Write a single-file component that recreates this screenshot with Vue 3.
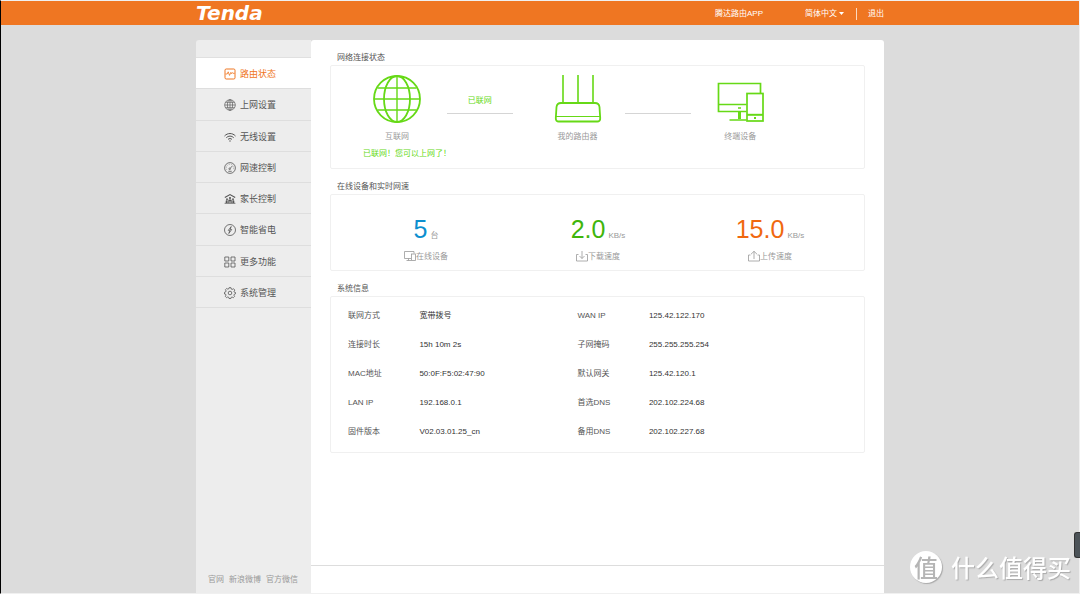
<script setup>
import { ref } from 'vue'

const language = ref('zh')
const menu = [
  { id: 'status', label: '路由状态' },
  { id: 'internet', label: '上网设置' },
  { id: 'wifi', label: '无线设置' },
  { id: 'speed', label: '网速控制' },
  { id: 'parent', label: '家长控制' },
  { id: 'power', label: '智能省电' },
  { id: 'more', label: '更多功能' },
  { id: 'system', label: '系统管理' }
]
const active = ref('status')

const stats = [
  { id: 'devices', value: '5', unit: '台', label: '在线设备' },
  { id: 'down', value: '2.0', unit: 'KB/s', label: '下载速度' },
  { id: 'up', value: '15.0', unit: 'KB/s', label: '上传速度' }
]

const info = [
  ['联网方式', '宽带拨号', 'WAN IP', '125.42.122.170'],
  ['连接时长', '15h 10m 2s', '子网掩码', '255.255.255.254'],
  ['MAC地址', '50:0F:F5:02:47:90', '默认网关', '125.42.120.1'],
  ['LAN IP', '192.168.0.1', '首选DNS', '202.102.224.68'],
  ['固件版本', 'V02.03.01.25_cn', '备用DNS', '202.102.227.68']
]
</script>

<template>
  <div class="page">
    <header class="topbar">
      <div class="topbar-inner">
        <a class="logo" href="#">Tenda</a>
        <nav class="top-links">
          <a class="app-link" href="#">腾达路由APP</a>
          <label class="language">
            <select v-model="language" aria-label="语言">
              <option value="zh">简体中文</option>
            </select>
            <svg class="caret" viewBox="0 0 5 3" aria-hidden="true"><path d="M0 0h5L2.500 3z" fill="#fff" /></svg>
          </label>
          <a class="logout" href="#">退出</a>
        </nav>
      </div>
    </header>

    <div class="shell">
      <aside class="sidebar">
        <nav>
          <ul class="menu">
            <li v-for="m in menu" :key="m.id">
              <a href="#" :class="{ active: active === m.id }" @click.prevent="active = m.id">
                <svg class="menu-icon" viewBox="0 0 12 12" fill="none" stroke="currentColor" stroke-width="0.8" aria-hidden="true">
                  <template v-if="m.id === 'status'">
                    <rect x="1" y="1" width="10" height="10" rx="1.200" stroke-width="1" />
                    <path d="M1.500 6h1.700l1-2.200 1.300 3.600 1.300-3 .8 1.300.7-1.200.6 .8h1.800" />
                  </template>
                  <template v-else-if="m.id === 'internet'">
                    <g stroke-width=".65">
                      <circle cx="6" cy="6" r="5.300" />
                      <ellipse cx="6" cy="6" rx="2.600" ry="5.300" />
                      <path d="M6 .7v10.600M.7 6h10.600M1.500 3.300h9M1.500 8.700h9" />
                    </g>
                  </template>
                  <template v-else-if="m.id === 'wifi'">
                    <path d="M.5 5C3.600 1.700 8.400 1.700 11.500 5M2.300 6.700c2.200-2.100 5.200-2.100 7.400 0M4 8.400c1.200-1.100 2.800-1.100 4 0" stroke-width="1" />
                    <circle cx="6" cy="10" r=".7" fill="currentColor" stroke="none" />
                  </template>
                  <template v-else-if="m.id === 'speed'">
                    <circle cx="6" cy="6" r="5.400" />
                    <path d="M2.800 7.800A3.700 3.700 0 1 1 9.200 7.800" stroke-width=".5" stroke-dasharray=".8 .9" />
                    <circle cx="5.700" cy="6.800" r=".8" />
                    <path d="M6.300 6.200L8.300 4M4.300 9.300h3.400" />
                  </template>
                  <template v-else-if="m.id === 'parent'">
                    <path d="M.8 4.500L6 1.600l5.200 2.900" stroke-width="1.200" />
                    <g fill="currentColor" stroke="none">
                      <circle cx="6" cy="5" r="1.100" />
                      <circle cx="3" cy="6.200" r=".9" />
                      <circle cx="9" cy="6.200" r=".9" />
                      <path d="M4.300 10V7.200q0-.8.8-.8h1.800q.8 0 .8.800V10H6.500V8.200h-1V10zM1.700 10V8q0-.7.7-.7h1.200V10zM8.400 10V7.300h1.200q.7 0 .7.700v2z" />
                    </g>
                    <path d="M.6 10.300h10.800" />
                  </template>
                  <template v-else-if="m.id === 'power'">
                    <circle cx="6" cy="6" r="5.500" />
                    <path d="M7.200 2.500L4.300 6.400h1.500L4.800 9.500l2.900-4H6.200z" stroke-linejoin="round" />
                  </template>
                  <template v-else-if="m.id === 'more'">
                    <path d="M.8 1h4v4h-4zM7 1h4v4H7zM.8 7h4v4h-4zM7 7h4v4H7z" />
                  </template>
                  <template v-else>
                    <circle cx="6" cy="6" r="1.800" />
                    <path d="M5 .7h2l.3 1.400.9.400 1.300-.8 1.300 1.400-.8 1.200.3.900 1.200.3v1.300l-1.200.4-.4 1 .7 1.200-1.300 1.300-1.200-.7-.9.300-.3 1.200H5l-.3-1.200-.9-.4-1.200.8-1.300-1.400.7-1.200-.3-.9L.5 7V5.300l1.200-.4.4-1-.7-1.200 1.300-1.200 1.200.7.800-.3z" stroke-linejoin="round" />
                  </template>
                </svg>
                <span>{{ m.label }}</span>
              </a>
            </li>
          </ul>
        </nav>
        <footer class="site-links">
          <a href="#">官网</a>
          <a href="#">新浪微博</a>
          <a href="#">官方微信</a>
        </footer>
      </aside>

      <main class="content">
        <div class="sections">
          <section>
            <h2>网络连接状态</h2>
            <div class="box network">
              <div class="node internet">
                <svg class="node-icon" viewBox="0 0 48 48" fill="none" stroke="#66d916" stroke-width="1.800" aria-hidden="true">
                  <circle cx="24" cy="24" r="23" />
                  <ellipse cx="24" cy="24" rx="13" ry="23" />
                  <path d="M24 1v46M1 24h46M4.500 13h39M4.500 35h39" stroke-width="1.400" />
                </svg>
                <span>互联网</span>
                <strong>已联网！您可以上网了！</strong>
              </div>
              <div class="link first">已联网</div>
              <div class="node router">
                <svg class="node-icon" viewBox="0 0 48 48" fill="none" stroke="#66d916" stroke-width="1.800" aria-hidden="true">
                  <path d="M9 0v28M24 0v28M39 0v28" stroke-width="1.600" />
                  <path d="M7 28h34q4 0 4.500 4l.7 11q.2 3.500-3 3.500H4.800q-3.200 0-3-3.500l.7-11Q3 28 7 28z" />
                  <path d="M2 41.500h44" stroke-width="1.200" />
                </svg>
                <span>我的路由器</span>
              </div>
              <div class="link second"></div>
              <div class="node terminals">
                <svg class="node-icon" viewBox="0 0 48 48" fill="none" stroke="#66d916" stroke-width="1.700" aria-hidden="true">
                  <path d="M44.500 18V8.500h-42v28h28M2.500 29.500h28" />
                  <path d="M23.500 37v7" stroke-width="3" />
                  <path d="M13.500 45h17M22 33h3" />
                  <rect x="31" y="18.500" width="16" height="27.500" />
                  <path d="M31 39.800h16" stroke-width="2" />
                  <path d="M38 43h2" stroke-width="1.800" />
                </svg>
                <span>终端设备</span>
              </div>
            </div>
          </section>

          <section>
            <h2>在线设备和实时网速</h2>
            <div class="box stats">
              <div v-for="s in stats" :key="s.id" class="stat" :class="s.id">
                <p class="reading"><b>{{ s.value }}</b><span>{{ s.unit }}</span></p>
                <p class="caption">
                  <svg viewBox="0 0 12 12" fill="none" stroke="#999" stroke-width=".8" aria-hidden="true">
                    <template v-if="s.id === 'devices'">
                      <path d="M10 2.500V.5H.5v7H7M4.500 7.500v2M2.500 9.500H7" />
                      <rect x="7.500" y="3" width="4" height="6.500" />
                    </template>
                    <template v-else-if="s.id === 'down'">
                      <path d="M2.500 3.500h-2v6.500h11V3.500h-2M6 0v7.500M3.500 5L6 7.500l2.500-2.500" />
                    </template>
                    <template v-else>
                      <path d="M2.500 4h-2v6h11V4h-2M6 8V.3M3 3.200L6 .3l3 2.900" />
                    </template>
                  </svg>
                  <span>{{ s.label }}</span>
                </p>
              </div>
            </div>
          </section>

          <section>
            <h2>系统信息</h2>
            <div class="box info">
              <table>
                <tbody>
                  <tr v-for="row in info" :key="row[0]">
                    <th scope="row">{{ row[0] }}</th>
                    <td>{{ row[1] }}</td>
                    <th scope="row">{{ row[2] }}</th>
                    <td>{{ row[3] }}</td>
                  </tr>
                </tbody>
              </table>
            </div>
          </section>
        </div>
        <div class="action-bar"></div>
      </main>
    </div>

    <button class="side-tab" type="button" aria-label="展开"></button>
    <div class="watermark"><span class="seal">值</span><span>什么值得买</span></div>
  </div>
</template>

<style>
body {
  background: #dcdcdc;
}
</style>

<style scoped>
.page {
  box-sizing: border-box;
  display: flex;
  flex-direction: column;
  min-height: 100vh;
  border: 1px solid #f0f0f0;
  border-left-color: #000;
  background: #dcdcdc;
  font: 8px/12px "Liberation Sans", "Noto Sans CJK SC", sans-serif;
  color: #555;
}
a {
  color: inherit;
  text-decoration: none;
}
h2, p, ul {
  margin: 0;
  padding: 0;
}
.topbar {
  background: #ef7622;
  color: #fff;
}
.topbar-inner, .shell {
  width: 100%;
  max-width: 688px;
  margin: 0 auto;
}
.topbar-inner {
  display: flex;
  align-items: center;
  justify-content: space-between;
  height: 24px;
}
.logo {
  font: italic 700 20px/24px "DejaVu Sans", sans-serif;
}
.top-links {
  display: flex;
  align-items: center;
  padding-top: 1px;
}
.language {
  display: flex;
  align-items: center;
  gap: 2px;
  margin: 0 12px 0 42px;
}
.language select {
  appearance: none;
  width: 32px;
  margin: 0;
  padding: 0;
  border: 0;
  background: transparent;
  color: #fff;
  font: inherit;
}
.caret {
  width: 5px;
  height: 3px;
}
.logout {
  padding-left: 11px;
  border-left: 1px solid #fbd9c0;
}
.shell {
  flex: 1;
  display: flex;
  margin-top: 15px;
}
.sidebar {
  box-sizing: border-box;
  display: flex;
  flex-direction: column;
  justify-content: space-between;
  width: 115px;
  padding-top: 17px;
  border-radius: 3px 0 0 0;
  background: #ededed;
}
.menu {
  display: grid;
  grid-auto-rows: 1fr;
  height: 250px;
  list-style: none;
  border-top: 1px solid #e0e0e0;
}
.menu a {
  box-sizing: border-box;
  display: flex;
  align-items: center;
  gap: 4px;
  height: 100%;
  padding: 2px 0 0 28px;
  border-bottom: 1px solid #dedede;
  font-size: 9px;
}
.menu a.active {
  background: #fff;
  color: #ef7622;
}
.menu-icon {
  width: 12px;
  height: 12px;
}
.site-links {
  display: flex;
  gap: 5px;
  padding: 0 0 7px 12px;
  color: #999;
}
.content {
  flex: 1;
  display: flex;
  flex-direction: column;
  justify-content: space-between;
  border-radius: 3px 3px 0 0;
  background: #fff;
}
.sections {
  display: flex;
  flex-direction: column;
  gap: 12px;
  padding: 12px 19px 0;
}
h2 {
  padding: 0 0 1px 7px;
  font-size: 8px;
  font-weight: 400;
}
.box {
  border: 1px solid #f0f0f0;
  border-radius: 2px;
}
.network {
  display: grid;
  grid-template-columns: 100fr 66fr 17fr 96fr 66fr 98fr 75fr;
  padding: 9px 0 8px 16px;
}
.node {
  display: flex;
  flex-direction: column;
  align-items: center;
  color: #999;
}
.router {
  grid-column: 4;
}
.node-icon {
  width: 48px;
  height: 48px;
  margin-bottom: 8px;
}
.node strong {
  align-self: flex-start;
  margin: 5px 0 0 16px;
  font-weight: 400;
  white-space: nowrap;
}
.internet {
  min-width: 0;
}
.node strong, .link {
  color: #66d916;
}
.link {
  box-sizing: border-box;
  height: 39px;
  padding-top: 20px;
  border-bottom: 1px solid #d5d5d5;
  text-align: center;
}
.stats {
  display: grid;
  grid-template-columns: repeat(3, 1fr);
  padding: 18px 8px 7px 9px;
}
.stat {
  text-align: center;
  color: #999;
}
.reading {
  display: flex;
  align-items: baseline;
  justify-content: center;
  gap: 3px;
}
.reading b {
  font-size: 25px;
  font-weight: 400;
  line-height: 32px;
}
.devices b {
  color: #0d8fcf;
}
.down b {
  color: #3fb50c;
}
.up b {
  color: #f0680f;
}
.caption {
  display: flex;
  align-items: center;
  justify-content: center;
  margin-top: 6px;
}
.caption svg {
  width: 12px;
  height: 12px;
}
.info {
  padding: 4px 6px 6px 17px;
}
table {
  width: 100%;
  border-collapse: collapse;
  table-layout: fixed;
}
th, td {
  height: 29px;
  padding: 0;
  text-align: left;
  font-weight: 400;
}
th {
  width: 14%;
}
td {
  color: #333;
}
td:nth-child(2) {
  width: 31%;
}
.action-bar {
  height: 27px;
  border-top: 1px solid #ddd;
}
.side-tab {
  position: fixed;
  right: 0;
  bottom: 36px;
  width: 6px;
  height: 26px;
  padding: 0;
  border: 1px solid #333;
  border-right: 0;
  border-radius: 3px 0 0 3px;
  background: #4c5358;
}
.watermark {
  position: fixed;
  right: 9px;
  bottom: 11px;
  display: flex;
  align-items: center;
  gap: 9px;
  color: #fff;
  font: 500 24px/32px "Noto Sans CJK SC", sans-serif;
  text-shadow: 1px 1px 1px #aaa;
}
.seal {
  width: 32px;
  height: 32px;
  border-radius: 50%;
  background: #fff;
  box-shadow: 1px 1px 1px #aaa;
  color: #b5b5b5;
  font-size: 24px;
  text-align: center;
  text-shadow: none;
}
</style>
